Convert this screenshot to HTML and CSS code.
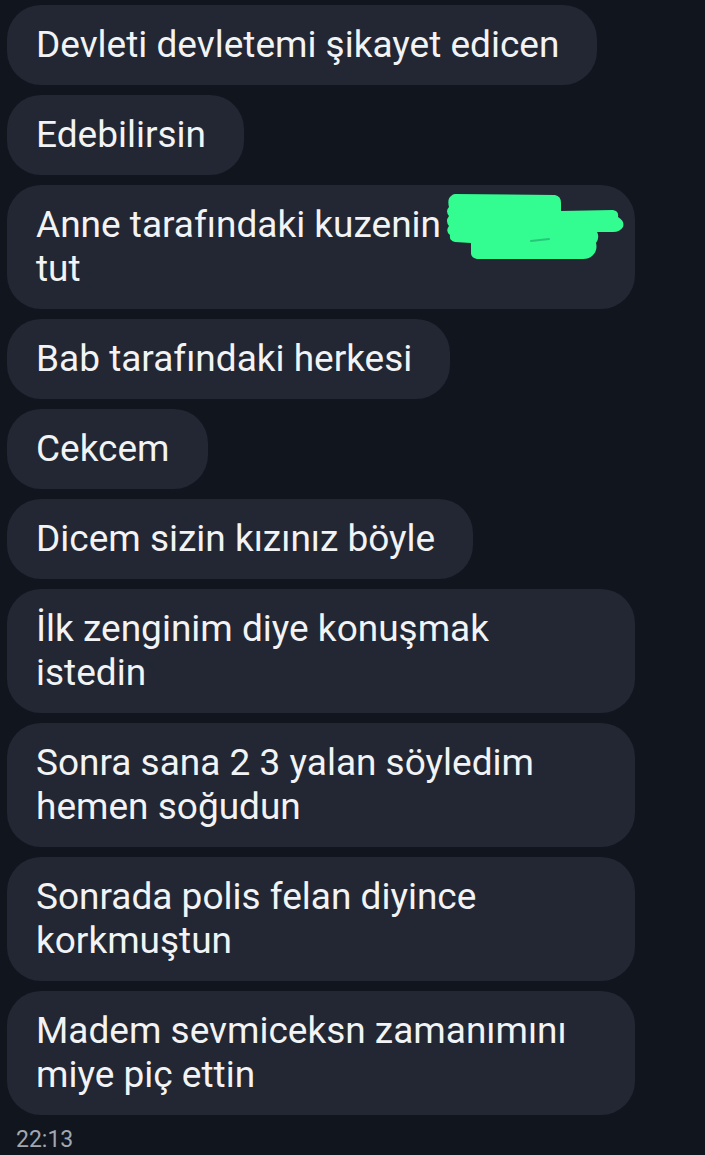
FILE: index.html
```html
<!DOCTYPE html>
<html lang="tr">
<head>
  <meta charset="UTF-8" />
  <meta name="viewport" content="width=device-width,initial-scale=1" />
  <title>Sohbet</title>
  <link rel="stylesheet" href="styles.css">
</head>
<body>
  <div class="chat">
    <div class="msg">Devleti devletemi şikayet edicen</div>
    <div class="msg">Edebilirsin</div>
    <div class="msg wide">Anne tarafındaki kuzenin<span class="blur"><svg viewBox="0 0 182 68" width="182" height="68"><path d="M10 1 L110 2 Q116 3 116 10 L116 18 L168 17 Q174 18 173 24 Q180 28 178 34 Q175 39 168 39 L152 39 Q155 44 151 50 Q153 58 147 63 Q144 66 138 66 L32 66 Q26 65 26 60 L26 50 L10 49 Q4 48 5 42 Q0 38 4 33 Q0 28 4 23 Q0 18 4 14 Q2 6 6 3 Q8 1 10 1 Z" fill="#33fd91"/><path d="M86 48 L104 46" stroke="#27c77a" stroke-width="2" stroke-linecap="round"/></svg></span> tut</div>
    <div class="msg">Bab tarafındaki herkesi</div>
    <div class="msg">Cekcem</div>
    <div class="msg">Dicem sizin kızınız böyle</div>
    <div class="msg wide">İlk zenginim diye konuşmak istedin</div>
    <div class="msg wide">Sonra sana 2 3 yalan söyledim hemen soğudun</div>
    <div class="msg wide">Sonrada polis felan diyince korkmuştun</div>
    <div class="msg wide">Madem sevmiceksn zamanımını miye piç ettin</div>
    <div class="time">22:13</div>
  </div>
</body>
</html>
```

FILE: styles.css
```css
*{box-sizing:border-box;margin:0;padding:0}
html,body{background:#11151e}
body{font-family:Roboto,"Noto Sans",sans-serif;color:#f2f3f5;min-height:100vh}
.chat{display:flex;flex-direction:column;align-items:flex-start;gap:10px;padding:5px 0 0 7px}
.msg{background:#222733;border-radius:34px;padding:18px 38px 18px 29px;font-size:37px;line-height:44px;
     max-width:628px}
.wide{width:628px}
.blur{display:inline-block;vertical-align:middle;height:0;position:relative;width:120px}
.blur svg{position:absolute;left:4px;top:-34px}
.time{color:#a3a7af;font-size:23px;line-height:27px;margin:1px 0 0 9px}
```
